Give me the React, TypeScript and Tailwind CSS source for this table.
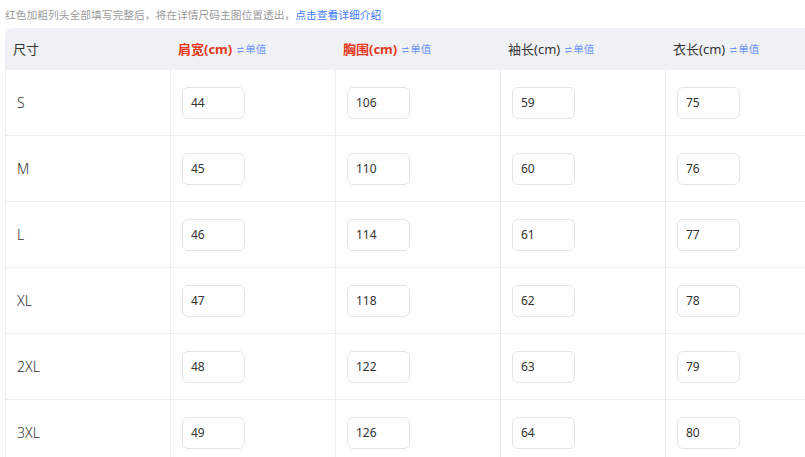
import React from "react";

const rows = [
  { size: "S", v: ["44", "106", "59", "75"] },
  { size: "M", v: ["45", "110", "60", "76"] },
  { size: "L", v: ["46", "114", "61", "77"] },
  { size: "XL", v: ["47", "118", "62", "78"] },
  { size: "2XL", v: ["48", "122", "63", "79"] },
  { size: "3XL", v: ["49", "126", "64", "80"] },
];

const cols = [
  { label: "肩宽(cm)", required: true },
  { label: "胸围(cm)", required: true },
  { label: "袖长(cm)", required: false },
  { label: "衣长(cm)", required: false },
];

function SwapIcon() {
  return (
    <svg width="7" height="8" viewBox="0 0 7 8" className="mr-[1px]">
      <path d="M0.3 2.5H6.3M4.4 0.9L6.3 2.5" stroke="#6f95f5" strokeWidth="1" fill="none" />
      <path d="M6.7 5.5H0.7M2.6 7.1L0.7 5.5" stroke="#6f95f5" strokeWidth="1" fill="none" />
    </svg>
  );
}

export default function App() {
  return (
    <div
      className="w-[805px] h-[457px] overflow-hidden bg-white"
      style={{ fontFamily: '"Noto Sans", "Noto Sans CJK SC", sans-serif' }}
    >
      <div className="h-[28px] pl-[5px] pt-[6px] text-[10.75px] leading-[18px] text-[#9a9a9a]">
        红色加粗列头全部填写完整后，将在详情尺码主图位置透出，
        <span className="text-[#3d7bff]">点击查看详细介绍</span>
      </div>

      <div className="ml-[5px] w-[830px]">
        {/* header */}
        <div className="flex h-[42px] items-center rounded-tl-[8px] bg-[#f0f1f5] pt-[1px] text-[13px] text-[#333]">
          <div className="w-[165px] pl-[8px]">尺寸</div>
          {cols.map((c) => (
            <div key={c.label} className="flex w-[165px] items-center pl-[8px]">
              <span className={c.required ? "font-bold text-[#e8391d]" : "text-[#333]"}>{c.label}</span>
              <span className="ml-[5px] flex items-center text-[10.5px] text-[#6f95f5]">
                <SwapIcon />
                单值
              </span>
            </div>
          ))}
        </div>

        {/* body */}
        {rows.map((r) => (
          <div key={r.size} className="flex h-[66px] border-b border-l border-[#eeeef0]">
            <div className="flex w-[164px] items-center pl-[11px] text-[14px] font-light text-[#333]">{r.size}</div>
            {r.v.map((val, i) => (
              <div key={i} className="flex w-[165px] items-center border-l border-[#eeeef0] pl-[11px]">
                <div className="flex h-[32px] w-[63px] items-center rounded-[6px] border border-[#e3e4e8] pl-[8px] text-[12px] text-[#333]">
                  {val}
                </div>
              </div>
            ))}
          </div>
        ))}
      </div>
    </div>
  );
}
